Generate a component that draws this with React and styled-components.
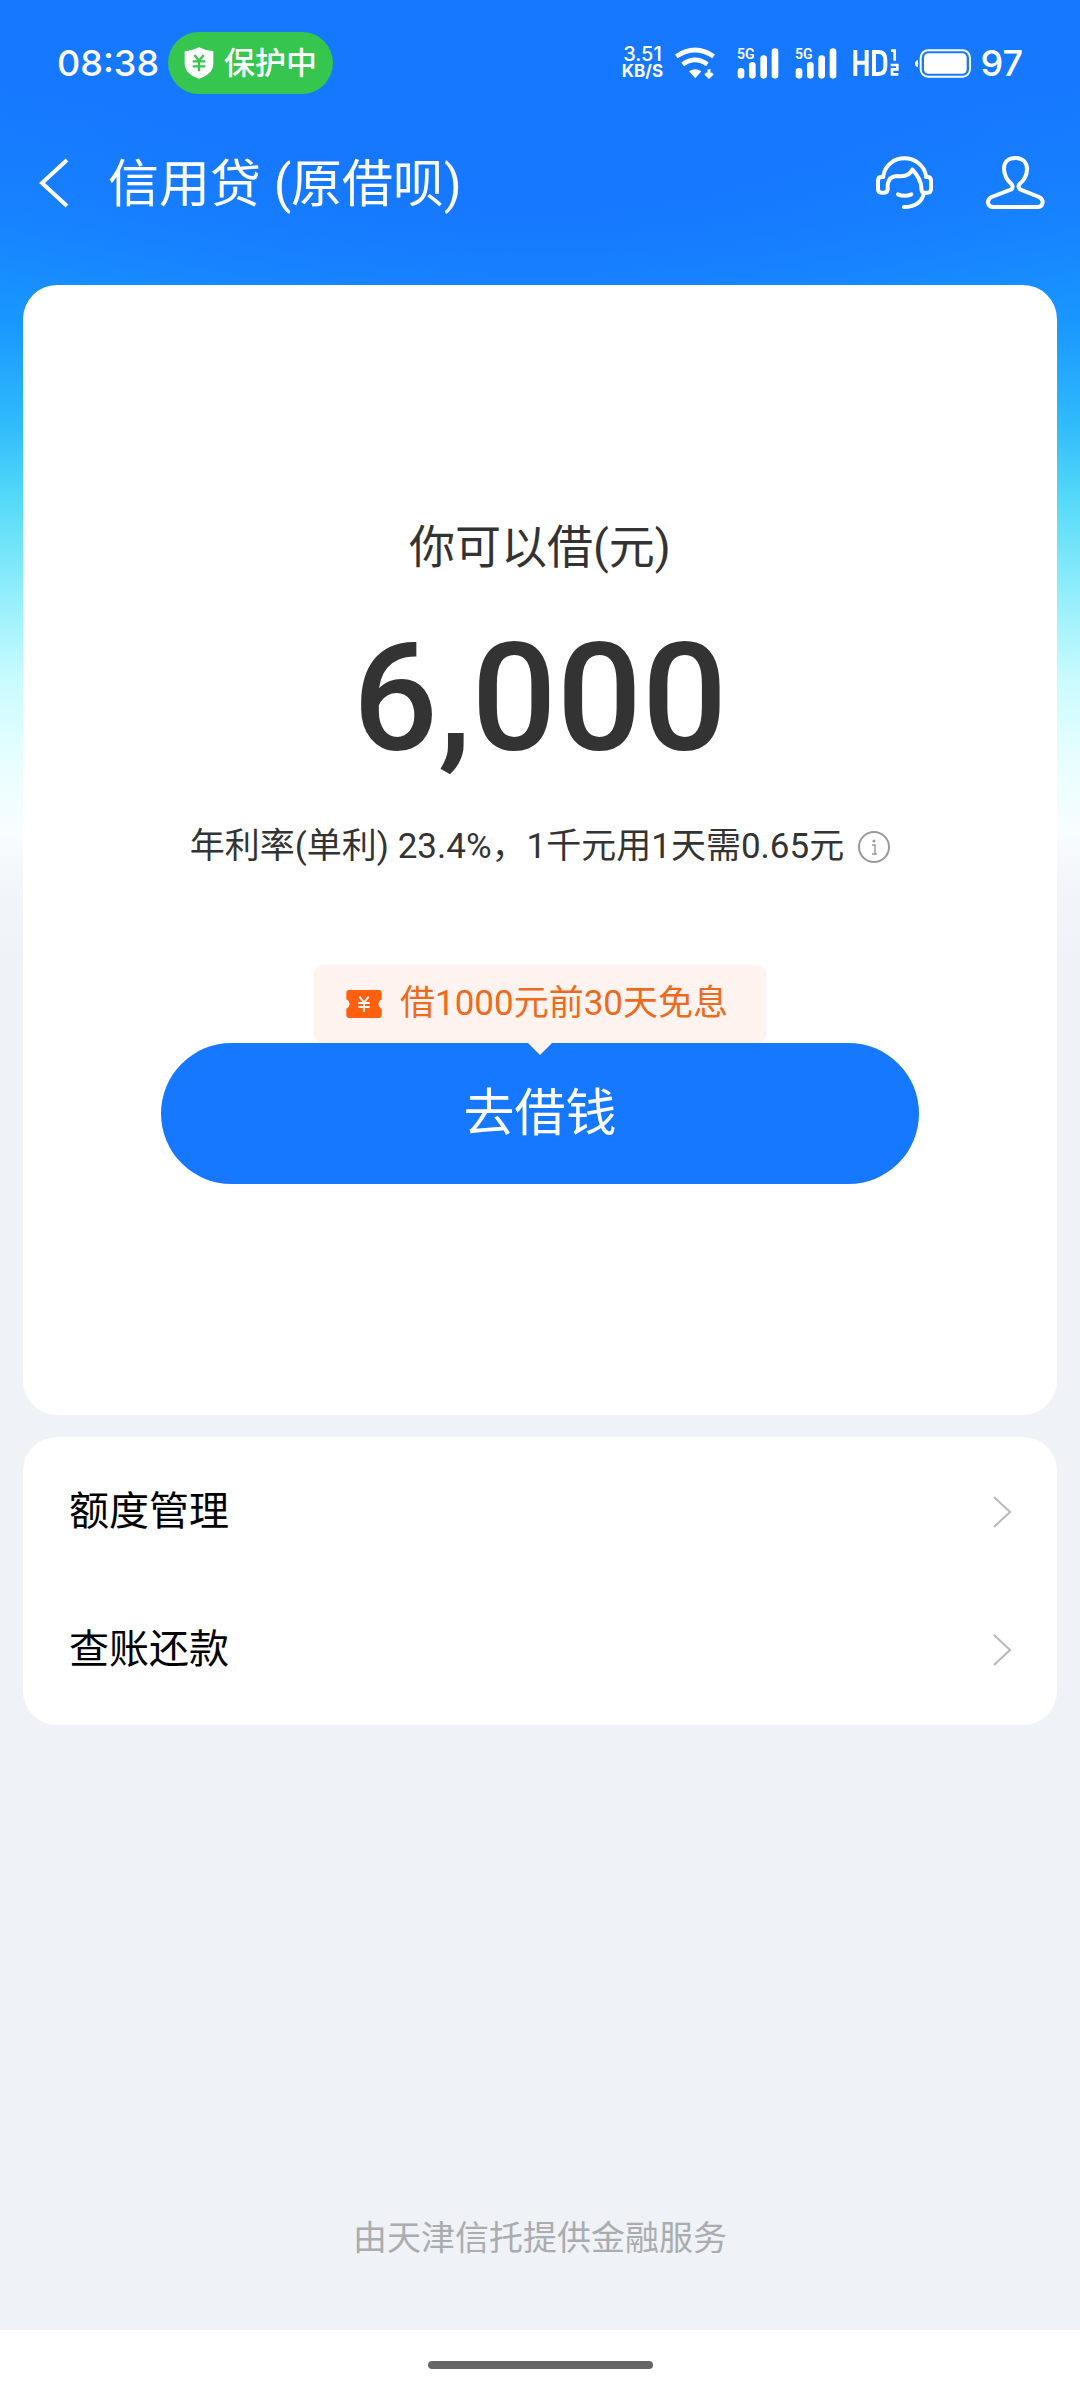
import React from "react";
import styled, { createGlobalStyle } from "styled-components";

const GlobalStyle = createGlobalStyle`
  *, *::before, *::after { box-sizing: border-box; }
  body {
    margin: 0;
    background: #eff2f7;
    font-family: Roboto, "Noto Sans CJK SC", sans-serif;
    color: #333333;
  }
  h1, p { margin: 0; font-weight: 400; }
  button { border: 0; padding: 0; background: none; font: inherit; color: inherit; cursor: pointer; }
  svg { display: block; flex: none; overflow: visible; }
`;

const Page = styled.div`
  min-height: 100vh;
  display: flex;
  flex-direction: column;
  background:
    radial-gradient(70% 420px at 50% 0, #1677ff 45%, rgba(22, 119, 255, 0) 100%),
    linear-gradient(
      #1677ff 0, #1677ff 60px, #1787ff 220px, #1896ff 320px, #2fbbfb 424px,
      #55daf8 500px, #98f0fb 603px, #c9fbfe 679px, #e6feff 756px, #f8fdff 832px,
      #f2f5f9 890px, #eff2f7 960px
    );
`;

const StatusBar = styled.div`
  display: flex;
  align-items: center;
  justify-content: space-between;
  height: 126px;
  padding: 0 57px;
  color: #ffffff;
  font-family: Inter, "Noto Sans CJK SC", sans-serif;
`;

const StatusGroup = styled.div`
  display: flex;
  align-items: center;
  gap: ${({ $gap }) => $gap}px;
`;

const Clock = styled.time`
  font-size: 36px;
  line-height: 48px;
  font-weight: 500;
`;

const GuardPill = styled.div`
  display: flex;
  align-items: center;
  gap: 10px;
  height: 62px;
  padding: 0 16px;
  border-radius: 31px;
  background: #36c54e;
  font-size: 31px;
  line-height: 48px;
  font-weight: 500;
`;

const Speed = styled.div`
  display: flex;
  flex-direction: column;
  align-items: center;
  width: 42px;
  white-space: nowrap;
  font-size: 20px;
  line-height: 17px;
  font-weight: 500;

  strong {
    font-size: 17px;
    font-weight: 700;
  }
`;

const Percent = styled.span`
  font-size: 36px;
  line-height: 48px;
  font-weight: 500;
`;

const Header = styled.header`
  display: flex;
  align-items: center;
  height: 114px;
  padding: 0 34px 0 38px;
  color: #ffffff;
`;

const Title = styled.h1`
  flex: 1;
  padding: 4px 0 0 38px;
  font-size: 51px;
  line-height: 64px;
`;

const HeaderActions = styled.div`
  display: flex;
  gap: 50px;
`;

const Main = styled.main`
  flex: 1;
  display: flex;
  flex-direction: column;
  gap: 22px;
  padding: 45px 23px 0;
`;

const Card = styled.section`
  border-radius: 34px;
  background: #ffffff;
`;

const LoanCard = styled(Card)`
  display: flex;
  flex-direction: column;
  align-items: center;
  padding: 230px 24px 231px;
`;

const Label = styled.p`
  font-size: 46px;
  line-height: 64px;
`;

const Amount = styled.p`
  margin: 38px 0 42px;
  font-size: 150px;
  line-height: 164px;
  font-weight: 500;
`;

const Rate = styled.div`
  display: flex;
  align-items: center;
  gap: 14px;
  font-size: 35px;
  line-height: 48px;
`;

const Offer = styled.div`
  position: relative;
  display: flex;
  align-items: center;
  gap: 18px;
  height: 78px;
  margin-top: 94px;
  padding: 0 38px 0 32px;
  border-radius: 8px;
  background: #fff3ef;
  color: #ee6a1c;
  font-size: 35px;
  line-height: 48px;

  &::after {
    content: "";
    position: absolute;
    top: 100%;
    left: 50%;
    margin-left: -12px;
    border: 12px solid transparent;
    border-top-color: #fff3ef;
    border-bottom: 0;
  }
`;

const BorrowButton = styled.button`
  width: 100%;
  max-width: 758px;
  height: 141px;
  border-radius: 71px;
  && {
    background: #1677ff;
    color: #ffffff;
    font-size: 51px;
    line-height: 64px;
  }
`;

const MenuCard = styled(Card)`
  padding: 6px 0;
`;

const MenuRow = styled.a`
  display: flex;
  align-items: center;
  justify-content: space-between;
  height: 138px;
  padding: 0 45px 0 46px;
  color: #000000;
  font-size: 40px;
  line-height: 48px;
  text-decoration: none;
`;

const Footer = styled.footer`
  padding: 0 24px 68px;
  text-align: center;
  color: #aaacb0;
  font-size: 34px;
  line-height: 48px;
`;

const NavBar = styled.div`
  display: flex;
  justify-content: center;
  align-items: center;
  height: 70px;
  background: #ffffff;
`;

const NavHandle = styled.div`
  width: 225px;
  height: 8px;
  border-radius: 4px;
  background: #666666;
`;

const ShieldIcon = () => (
  <svg width="30" height="32" viewBox="0 0 90 96">
    <path d="M45 1 Q64 11 88 13 V50 Q88 80 45 95 Q2 80 2 50 V13 Q26 11 45 1Z" fill="#fff" />
    <path d="M31 24 L45 41 L59 24 M26 43 H64 M26 58 H64 M45 41 V73" fill="none" stroke="#36c54e" strokeWidth="7" />
  </svg>
);

const WifiIcon = () => (
  <svg width="46" height="31" viewBox="0 0 138 93" fill="none" stroke="#fff">
    <path d="M4 25 Q60 -13 116 25" strokeWidth="14" />
    <path d="M23 49 Q60 22 97 49" strokeWidth="14" />
    <path d="M42 70 Q60 57 79 70 L61 91Z" fill="#fff" stroke="none" />
    <path d="M102 64 V84 M91 76 L102 87 L113 76" strokeWidth="9" />
  </svg>
);

const SignalIcon = () => (
  <svg width="42" height="31" viewBox="0 0 126 93" fill="#fff">
    <text x="0" y="32" fontSize="42" fontWeight="600" fontFamily="Roboto, sans-serif">5G</text>
    <rect x="2" y="60" width="20" height="32" rx="10" />
    <rect x="36" y="42" width="20" height="50" rx="10" />
    <rect x="70" y="22" width="20" height="70" rx="10" />
    <rect x="104" y="1" width="20" height="91" rx="10" />
  </svg>
);

const HdIcon = () => (
  <svg width="46" height="28" viewBox="0 0 138 84" fill="none" stroke="#fff" strokeWidth="12">
    <path d="M7 3 V81 M41 3 V81 M7 41 H41 M63 9 H76 Q97 9 97 32 V52 Q97 75 76 75 H63Z" />
    <path d="M114 5 H125 V35 M113 48 H133 V61 H117 V76 H136" strokeWidth="8" />
  </svg>
);

const BatteryIcon = () => (
  <svg width="56" height="29" viewBox="0 0 168 87">
    <path d="M9 33 Q0 36 0 44 Q0 52 9 55Z" fill="#fff" />
    <rect x="17" y="4" width="148" height="79" rx="22" fill="none" stroke="#fff" strokeWidth="6" />
    <rect x="27" y="13" width="128" height="61" rx="13" fill="#fff" />
  </svg>
);

const BackIcon = () => (
  <svg width="32" height="52" viewBox="0 0 32 52" fill="none" stroke="#fff" strokeWidth="4">
    <path d="M29 3 L4 26 L29 49" />
  </svg>
);

const ServiceIcon = () => (
  <svg width="60" height="56" viewBox="0 0 180 168" fill="none" stroke="#fff" strokeWidth="12" strokeLinecap="round" strokeLinejoin="round">
    <path d="M28 62 C34 30 60 10 91 10 C122 10 150 30 156 62" />
    <path d="M28 66 H22 Q12 66 12 77 V102 Q12 113 23 113 H30 Q41 113 41 102 V90 C43 71 54 63 70 63 C92 66 107 62 115 44 C132 62 141 76 142 98 Q142 113 150 113 H161 Q171 113 171 102 V77 Q171 66 161 66 H156" />
    <path d="M149 115 C146 140 122 156 90 156" />
    <path d="M72 118 Q92 127 112 118" />
  </svg>
);

const PersonIcon = () => (
  <svg width="62" height="56" viewBox="0 0 186 168" fill="none" stroke="#fff" strokeWidth="12" strokeLinejoin="round">
    <path d="M82 103 Q90 94 82 87 C67 74 60 62 60 40 C60 20 74 9 94 9 C114 9 129 20 129 42 C129 62 121 75 107 87 Q100 94 108 103 L165 126 Q177 132 176 143 Q174 156 160 156 H28 Q14 156 12 143 Q11 132 23 126Z" />
  </svg>
);

const InfoIcon = () => (
  <svg width="32" height="32" viewBox="0 0 32 32" fill="none" stroke="#999">
    <circle cx="16" cy="16" r="15" strokeWidth="2" />
    <path d="M14 14 H17 V23 M14 23 H19" strokeWidth="1.5" />
    <circle cx="16" cy="10" r="1.5" fill="#999" stroke="none" />
  </svg>
);

const CouponIcon = () => (
  <svg width="36" height="28" viewBox="0 0 108 84">
    <path d="M9 0 H99 Q107 0 107 9 V28 Q98 32 97 42 Q98 52 107 56 V75 Q107 84 99 84 H9 Q1 84 1 75 V56 Q10 52 11 42 Q10 32 1 28 V9 Q1 0 9 0Z" fill="#ff6010" />
    <path d="M40 20 L54 38 L68 20 M37 39 H71 M37 51 H71 M54 38 V66" fill="none" stroke="#fff3ef" strokeWidth="6" />
  </svg>
);

const ChevronIcon = () => (
  <svg width="20" height="32" viewBox="0 0 20 32" fill="none" stroke="#b8b8b8" strokeWidth="2">
    <path d="M2 1 L18 16 L2 31" />
  </svg>
);

const menu = ["额度管理", "查账还款"];

export default function App() {
  return (
    <Page>
      <GlobalStyle />
      <StatusBar>
        <StatusGroup $gap={9}>
          <Clock>08:38</Clock>
          <GuardPill>
            <ShieldIcon />
            保护中
          </GuardPill>
        </StatusGroup>
        <StatusGroup $gap={16}>
          <StatusGroup $gap={12}>
            <Speed>
              <span>3.51</span>
              <strong>KB/S</strong>
            </Speed>
            <WifiIcon />
          </StatusGroup>
          <SignalIcon />
          <SignalIcon />
          <HdIcon />
          <StatusGroup $gap={9}>
            <BatteryIcon />
            <Percent>97</Percent>
          </StatusGroup>
        </StatusGroup>
      </StatusBar>
      <Header>
        <button aria-label="返回"><BackIcon /></button>
        <Title>信用贷 (原借呗)</Title>
        <HeaderActions>
          <button aria-label="客服"><ServiceIcon /></button>
          <button aria-label="我的"><PersonIcon /></button>
        </HeaderActions>
      </Header>
      <Main>
        <LoanCard>
          <Label>你可以借(元)</Label>
          <Amount>6,000</Amount>
          <Rate>
            年利率(单利) 23.4%，1千元用1天需0.65元
            <button aria-label="利率说明"><InfoIcon /></button>
          </Rate>
          <Offer>
            <CouponIcon />
            借1000元前30天免息
          </Offer>
          <BorrowButton>去借钱</BorrowButton>
        </LoanCard>
        <MenuCard as="nav">
          {menu.map((name) => (
            <MenuRow key={name} href="#">
              {name}
              <ChevronIcon />
            </MenuRow>
          ))}
        </MenuCard>
      </Main>
      <Footer>由天津信托提供金融服务</Footer>
      <NavBar>
        <NavHandle />
      </NavBar>
    </Page>
  );
}
